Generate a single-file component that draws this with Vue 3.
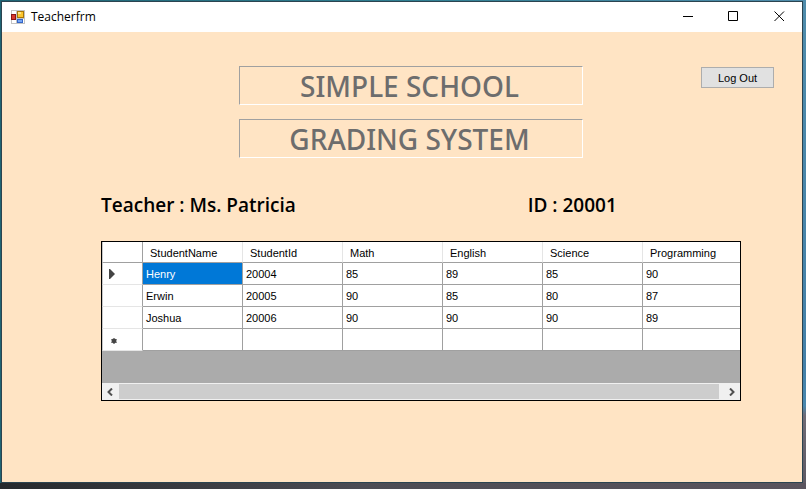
<script setup>
import { ref } from 'vue'

const columns = ['StudentName', 'StudentId', 'Math', 'English', 'Science', 'Programming']
const rows = [
  ['Henry', '20004', '85', '89', '85', '90'],
  ['Erwin', '20005', '90', '85', '80', '87'],
  ['Joshua', '20006', '90', '90', '90', '89'],
]
const current = ref({ row: 0, col: 0 })
</script>

<template>
  <div class="desktop">
    <main class="window">
      <header class="titlebar">
        <svg class="app-icon" width="15" height="15" viewBox="0 0 15 15" aria-hidden="true" shape-rendering="crispEdges">
          <rect x="0" y="0" width="14" height="14" fill="#c3c3c3" />
          <rect x="1" y="1" width="4" height="3" fill="#fff" />
          <rect x="1" y="10" width="4" height="3" fill="#fff" />
          <rect x="12" y="9" width="1" height="4" fill="#fff" />
          <rect x="0" y="4" width="5" height="6" fill="#8c1414" />
          <rect x="1" y="5" width="3" height="4" fill="#d8392c" />
          <rect x="6" y="1" width="7" height="7" fill="#a87508" />
          <rect x="7" y="2" width="5" height="5" fill="#fbc62f" />
          <rect x="7" y="2" width="3" height="2" fill="#ffe487" />
          <rect x="6" y="9" width="6" height="4" fill="#3465c8" />
          <rect x="7" y="10" width="4" height="2" fill="#75a5f5" />
        </svg>
        <h1 class="caption">Teacherfrm</h1>
        <div class="controls">
          <button type="button" class="control" aria-label="Minimize">
            <svg width="11" height="11" viewBox="0 0 11 11"><path d="M1 5.5H11" /></svg>
          </button>
          <button type="button" class="control" aria-label="Maximize">
            <svg width="11" height="11" viewBox="0 0 11 11"><path d="M.5 .5H9.5V9.5H.5Z" /></svg>
          </button>
          <button type="button" class="control" aria-label="Close">
            <svg width="11" height="11" viewBox="0 0 11 11"><path d="M.5 .5L10 10M10 .5L.5 10" /></svg>
          </button>
        </div>
      </header>

      <section class="form">
        <div class="top">
          <div class="titles">
            <input class="title" type="text" value="SIMPLE SCHOOL" aria-label="System name, first line" disabled />
            <input class="title" type="text" value="GRADING SYSTEM" aria-label="System name, second line" disabled />
          </div>
          <button type="button" class="logout">Log Out</button>
        </div>

        <div class="identity">
          <p class="who">Teacher : Ms. Patricia</p>
          <p class="who">ID : 20001</p>
        </div>

        <div class="grid">
          <div class="viewport">
            <table>
              <colgroup>
                <col class="col-head" />
                <col v-for="c in columns" :key="c" class="col-data" />
              </colgroup>
              <thead>
                <tr>
                  <th class="corner"></th>
                  <th v-for="c in columns" :key="c" scope="col">{{ c }}</th>
                </tr>
              </thead>
              <tbody>
                <tr v-for="(row, r) in rows" :key="r">
                  <th class="row-head" scope="row">
                    <svg v-if="current.row === r" width="6" height="10" viewBox="0 0 6 10"><path d="M0 0H1L6 5L1 10H0Z" fill="#444" /></svg>
                  </th>
                  <td
                    v-for="(value, c) in row"
                    :key="c"
                    :class="{ selected: current.row === r && current.col === c }"
                    @click="current = { row: r, col: c }"
                  >{{ value }}</td>
                </tr>
                <tr>
                  <th class="row-head new-row" scope="row">
                    <svg width="6" height="8" viewBox="0 0 6 8"><path d="M3 2V8M0 3.5L6 6.5M6 3.5L0 6.5" stroke="#666" /><circle cx="3" cy="5" r="2.4" fill="#444" /></svg>
                  </th>
                  <td v-for="c in columns" :key="c"></td>
                </tr>
              </tbody>
            </table>
          </div>
          <div class="scrollbar">
            <button type="button" class="arrow" aria-label="Scroll left">
              <svg width="7" height="8" viewBox="0 0 7 8"><path d="M5 .5L1.5 4L5 7.5" /></svg>
            </button>
            <div class="track"><div class="thumb"></div></div>
            <button type="button" class="arrow" aria-label="Scroll right">
              <svg width="7" height="8" viewBox="0 0 7 8"><path d="M2 .5L5.5 4L2 7.5" /></svg>
            </button>
          </div>
        </div>
      </section>
    </main>
  </div>
</template>

<style>
body {
  margin: 0;
}
</style>

<style scoped>
* {
  box-sizing: border-box;
}

.desktop {
  display: flex;
  min-height: 100vh;
  padding: 1px 3px 6px 1px;
  background:
    linear-gradient(90deg, #25292d, #4c4c54 45%, #5a545e) bottom / 100% 6px no-repeat,
    linear-gradient(180deg, #4f8cab, #4480a8 75%, #4a88ae 83%, #6f6b75 85%, #5c5862) right / 3px 100% no-repeat,
    linear-gradient(90deg, #1f6474, #2f7f92 50%, #4f8cab);
  font-family: "Liberation Sans", Arial, sans-serif;
  font-size: 11px;
  color: #000;
}

.window {
  display: flex;
  flex: 1;
  flex-direction: column;
  min-width: 0;
  border: 1px solid #2b4450;
  background: #ffe4c4;
}

.titlebar {
  display: flex;
  align-items: center;
  height: 30px;
  padding-left: 9px;
  background: #fff;
}

.caption {
  flex: 1;
  margin: 0 0 0 5px;
  font: 400 12px/16px "Open Sans", sans-serif;
}

.controls {
  display: flex;
  height: 100%;
}

.control {
  display: flex;
  align-items: center;
  justify-content: center;
  width: 46px;
  padding: 0 0 2px;
  border: 0;
  background: none;
}

.control path {
  fill: none;
  stroke: #000;
}

.form {
  flex: 1;
  padding: 34px 61px 0 99px;
}

.top {
  display: flex;
  justify-content: center;
  position: relative;
  padding-right: 20px;
}

.titles {
  display: flex;
  flex-direction: column;
  gap: 14px;
  width: 344px;
}

.title {
  width: 100%;
  height: 39px;
  padding: 0 3px 0 0;
  border: 1px solid;
  border-color: #a0a0a0 #fff #fff #a0a0a0;
  border-radius: 0;
  background: transparent;
  color: #6d6d6d;
  font: 500 28px/36px "Noto Sans", sans-serif;
  text-align: center;
}

.logout {
  position: absolute;
  top: 1px;
  right: -33px;
  width: 73px;
  height: 21px;
  padding: 0;
  border: 1px solid #adadad;
  background: #e1e1e1;
  color: #000;
  font: inherit;
}

.identity {
  display: grid;
  grid-template-columns: 2fr 1fr;
  margin-top: 33px;
}

.who {
  margin: 0;
  font: 600 19px/28px "Open Sans", sans-serif;
}

.grid {
  display: flex;
  flex-direction: column;
  margin-top: 22px;
  border: 1px solid #000;
  background: #ababab;
}

.viewport {
  min-height: 141px;
  overflow: hidden;
}

table {
  width: 641px;
  table-layout: fixed;
  border-collapse: separate;
  border-spacing: 0;
}

.col-head {
  width: 41px;
}

.col-data {
  width: 100px;
}

th,
td {
  height: 22px;
  padding: 0 3px;
  border-right: 1px solid #a0a0a0;
  border-bottom: 1px solid #a0a0a0;
  background: #fff;
  font-weight: 400;
  line-height: 16px;
  text-align: left;
  white-space: nowrap;
}

thead th {
  height: 21px;
  padding: 2px 7px 0;
  border-right-color: #e5e5e5;
}

thead .corner {
  border-right-color: #a0a0a0;
}

.corner,
.row-head {
  border-left: 1px solid #c8c8c8;
}

.row-head {
  padding: 0 6px;
  border-bottom-color: #e5e5e5;
}

.row-head svg {
  display: block;
}

.new-row svg {
  margin-left: 2px;
}

.selected {
  background: #0078d7;
  color: #fff;
}

.scrollbar {
  display: flex;
  height: 17px;
  background: #f0f0f0;
}

.arrow {
  display: flex;
  align-items: center;
  justify-content: center;
  width: 17px;
  padding: 0;
  border: 0;
  background: #f0f0f0;
}

.arrow path {
  fill: none;
  stroke: #505050;
  stroke-width: 2;
}

.track {
  flex: 1;
  padding: 1px 4px 1px 0;
}

.thumb {
  height: 100%;
  background: #cdcdcd;
}
</style>
